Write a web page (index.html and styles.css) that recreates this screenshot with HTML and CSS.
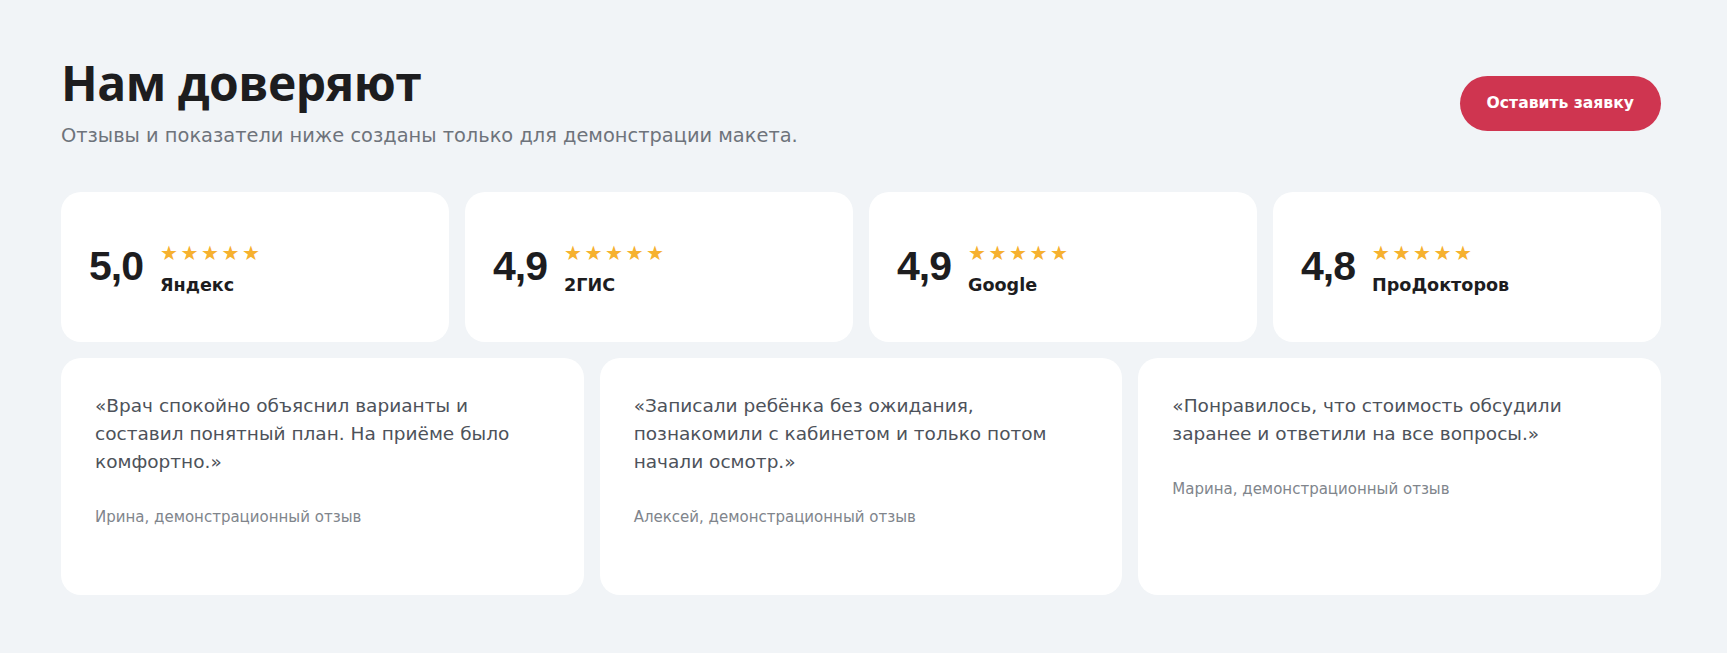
FILE: index.html
```html
<!DOCTYPE html>
<html lang="ru">

<head>
    <meta charset="UTF-8">
    <meta name="viewport" content="width=device-width, initial-scale=1.0">
    <title>Нам доверяют</title>
    <link rel="stylesheet" href="styles.css">
</head>

<body>
    <section class="trust">
        <div class="trust-head">
            <div>
                <h2 class="trust-title">Нам доверяют</h2>
                <p class="trust-sub">Отзывы и показатели ниже созданы только для демонстрации макета.</p>
            </div>
            <a class="btn" href="#">Оставить заявку</a>
        </div>

        <div class="ratings">
            <div class="rating-card">
                <span class="rating-value">5,0</span>
                <div class="rating-info">
                    <div class="stars">★★★★★</div>
                    <div class="rating-name">Яндекс</div>
                </div>
            </div>
            <div class="rating-card">
                <span class="rating-value">4,9</span>
                <div class="rating-info">
                    <div class="stars">★★★★★</div>
                    <div class="rating-name">2ГИС</div>
                </div>
            </div>
            <div class="rating-card">
                <span class="rating-value">4,9</span>
                <div class="rating-info">
                    <div class="stars">★★★★★</div>
                    <div class="rating-name">Google</div>
                </div>
            </div>
            <div class="rating-card">
                <span class="rating-value">4,8</span>
                <div class="rating-info">
                    <div class="stars">★★★★★</div>
                    <div class="rating-name">ПроДокторов</div>
                </div>
            </div>
        </div>

        <div class="reviews">
            <div class="review-card">
                <p class="review-text">«Врач спокойно объяснил варианты и составил понятный план. На приёме было комфортно.»</p>
                <p class="review-author">Ирина, демонстрационный отзыв</p>
            </div>
            <div class="review-card">
                <p class="review-text">«Записали ребёнка без ожидания, познакомили с кабинетом и только потом начали осмотр.»</p>
                <p class="review-author">Алексей, демонстрационный отзыв</p>
            </div>
            <div class="review-card">
                <p class="review-text">«Понравилось, что стоимость обсудили заранее и ответили на все вопросы.»</p>
                <p class="review-author">Марина, демонстрационный отзыв</p>
            </div>
        </div>
    </section>
</body>

</html>
```

FILE: styles.css
```css
body {
    margin: 0;
    background-color: #f1f4f7;
    font-family: "DejaVu Sans", "Open Sans", sans-serif;
    color: #1d1d1f;
}

.trust {
    width: 1600px;
    margin: 0 61px;
    padding-top: 57px;
}

.trust-head {
    display: flex;
    justify-content: space-between;
    align-items: center;
}

.trust-title {
    margin: 0;
    font-family: "Open Sans", sans-serif;
    font-size: 48px;
    line-height: 1.1;
    font-weight: 700;
    letter-spacing: -0.5px;
    color: #1d1d1f;
}

.trust-sub {
    margin: 12px 0 0;
    font-size: 19.4px;
    line-height: 28px;
    color: #6e737b;
}

.btn {
    display: block;
    padding: 17px 27px;
    line-height: 21px;
    border-radius: 28px;
    background-color: #cf3550;
    color: #ffffff;
    font-size: 15.6px;
    font-weight: 700;
    text-decoration: none;
}

.ratings {
    display: grid;
    grid-template-columns: repeat(4, 1fr);
    gap: 16px;
    margin-top: 42px;
}

.rating-card {
    height: 150px;
    box-sizing: border-box;
    padding: 0 28px;
    display: flex;
    align-items: center;
    gap: 17px;
    background-color: #ffffff;
    border-radius: 20px;
}

.rating-value {
    font-family: "Liberation Sans", Arial, sans-serif;
    font-size: 41px;
    line-height: 41px;
    font-weight: 700;
    letter-spacing: -1px;
    color: #1d1d1f;
}

.rating-info {
    padding-top: 5px;
}

.stars {
    font-size: 20px;
    line-height: 20px;
    letter-spacing: 2.6px;
    color: #f6b12f;
}

.rating-name {
    margin-top: 12px;
    font-size: 17.6px;
    line-height: 20px;
    font-weight: 700;
    color: #1d1d1f;
}

.reviews {
    display: grid;
    grid-template-columns: repeat(3, 1fr);
    gap: 16px;
    margin-top: 16px;
}

.review-card {
    min-height: 237px;
    box-sizing: border-box;
    padding: 34px;
    background-color: #ffffff;
    border-radius: 20px;
}

.review-text {
    margin: 0;
    font-size: 18.5px;
    line-height: 28px;
    color: #4d525a;
}

.review-author {
    margin: 31px 0 0;
    font-size: 15px;
    line-height: 20px;
    color: #80858c;
}
```
